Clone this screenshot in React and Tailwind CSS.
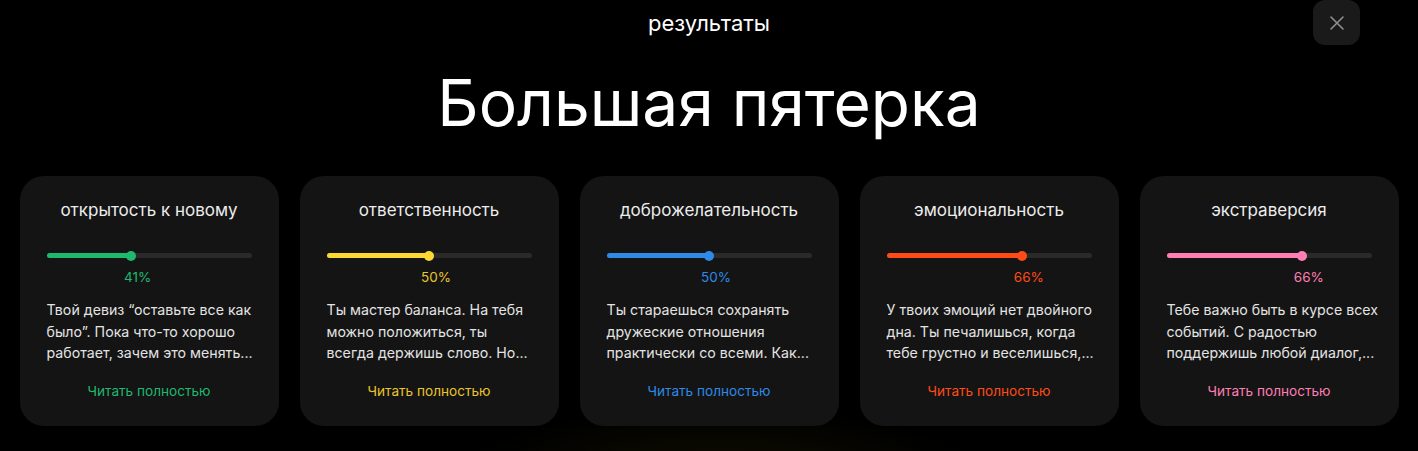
import React from "react";

const cards = [
  {
    title: "открытость к новому",
    pct: 41,
    bar: "bg-[#1fb86f]",
    text: "text-[#1fb86f]",
    lines: ["Твой девиз “оставьте все как", "было”. Пока что-то хорошо", "работает, зачем это менять..."],
  },
  {
    title: "ответственность",
    pct: 50,
    bar: "bg-[#fdd835]",
    text: "text-[#ebc52c]",
    lines: ["Ты мастер баланса. На тебя", "можно положиться, ты", "всегда держишь слово. Но..."],
  },
  {
    title: "доброжелательность",
    pct: 50,
    bar: "bg-[#2e8ae6]",
    text: "text-[#2e8ae6]",
    lines: ["Ты стараешься сохранять", "дружеские отношения", "практически со всеми. Как..."],
  },
  {
    title: "эмоциональность",
    pct: 66,
    bar: "bg-[#ff4c17]",
    text: "text-[#ff4c17]",
    lines: ["У твоих эмоций нет двойного", "дна. Ты печалишься, когда", "тебе грустно и веселишься,..."],
  },
  {
    title: "экстраверсия",
    pct: 66,
    bar: "bg-[#ff7fb5]",
    text: "text-[#ff7fb5]",
    lines: ["Тебе важно быть в курсе всех", "событий. С радостью", "поддержишь любой диалог,..."],
  },
];

function Card({ c }) {
  return (
    <div className="w-[259px] h-[250px] rounded-[24px] bg-[#141414] flex flex-col px-[27px] pt-[23px]">
      <div className="text-center text-[17px] leading-[22px] text-[#ececec]">{c.title}</div>
      <div className="relative mt-[32px] h-[5px] rounded-full bg-[#2a2a2a]">
        <div className={`absolute left-0 top-0 h-[5px] rounded-full ${c.bar}`} style={{ width: `${c.pct}%` }} />
        <div
          className={`absolute top-[-2.5px] w-[10px] h-[10px] rounded-full ${c.bar} -translate-x-1/2`}
          style={{ left: `${c.pct}%` }}
        />
      </div>
      <div className="relative h-[18px] mt-[10px]">
        <div
          className={`absolute top-0 text-[13.5px] leading-[18px] ${c.text} -translate-x-1/2 ml-[7px]`}
          style={{ left: `${c.pct}%` }}
        >
          {c.pct}%
        </div>
      </div>
      <div className="mt-[13px] text-[14.2px] leading-[21.5px] text-[#e3e3e3] whitespace-nowrap">
        {c.lines.map((l) => (
          <div key={l}>{l}</div>
        ))}
      </div>
      <div className={`mt-[18px] text-center text-[13.6px] leading-[18px] ${c.text}`}>Читать полностью</div>
    </div>
  );
}

export default function App() {
  return (
    <div
      className="relative w-[1418px] h-[451px] overflow-hidden bg-black text-white"
      style={{ fontFamily: "Inter, 'Noto Sans', sans-serif" }}
    >
      <div className="pointer-events-none absolute left-[460px] top-[405px] w-[520px] h-[140px] rounded-full bg-[radial-gradient(ellipse_at_center,rgba(110,95,0,0.14),rgba(0,0,0,0)_70%)]" />
      <button className="absolute left-[1313px] top-0 w-[47px] h-[45px] rounded-[12px] bg-[#1a1a1a] flex items-center justify-center">
        <svg width="16" height="16" viewBox="0 0 16 16" fill="none" stroke="#8f8f8f" strokeWidth="1.6" strokeLinecap="round">
          <path d="M2 2L14 14M14 2L2 14" />
        </svg>
      </button>
      <div className="relative flex flex-col items-center">
        <div className="mt-[9px] text-[22px] leading-[28px] text-white">результаты</div>
        <h1 className="mt-[34px] text-[64px] leading-[64px] font-normal text-white">Большая пятерка</h1>
        <div className="mt-[41px] flex gap-[21px]">
          {cards.map((c) => (
            <Card key={c.title} c={c} />
          ))}
        </div>
      </div>
    </div>
  );
}
